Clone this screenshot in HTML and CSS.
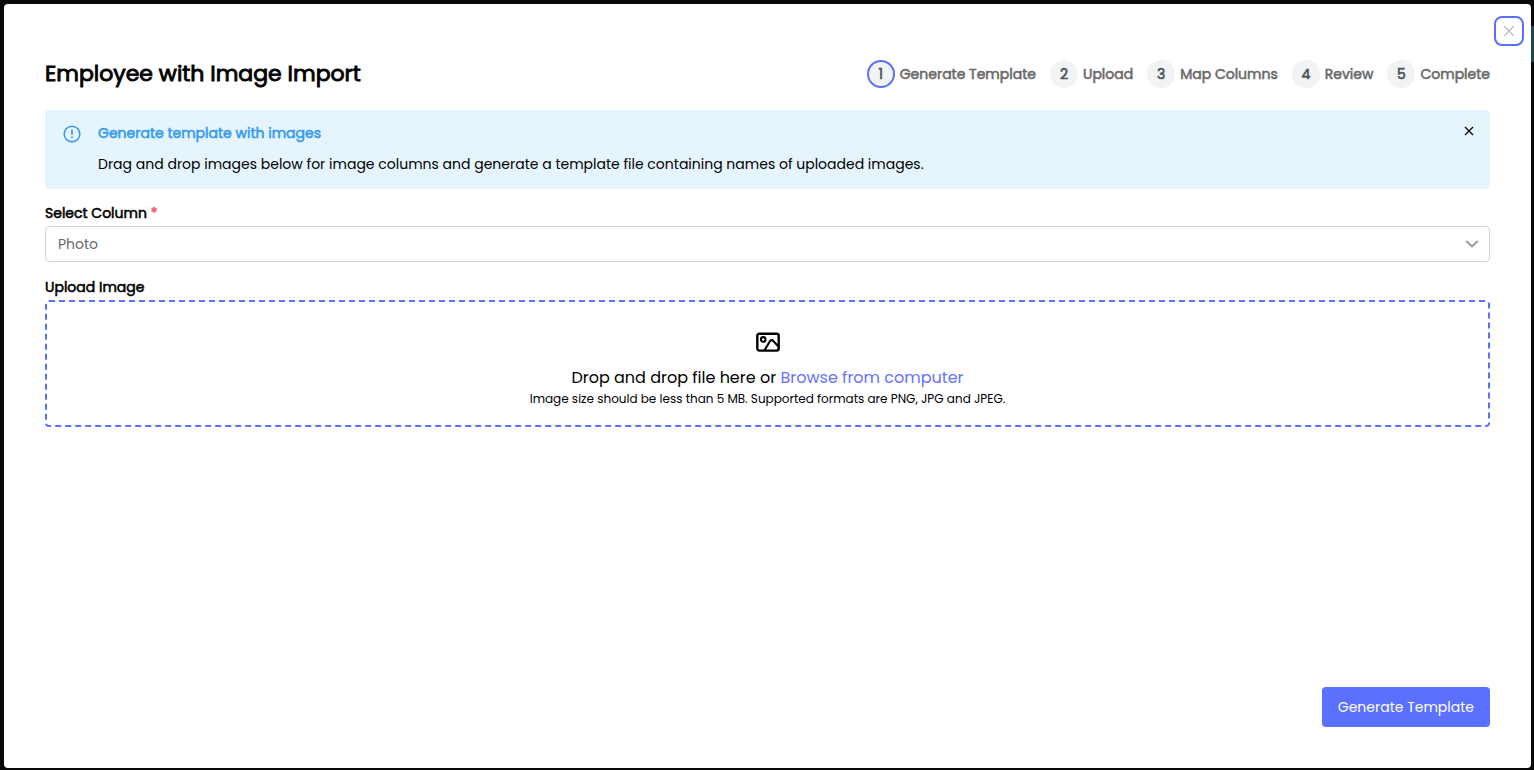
FILE: index.html
```html
<!DOCTYPE html>
<html lang="en">
<head>
<meta charset="utf-8">
<meta name="viewport" content="width=device-width, initial-scale=1">
<title>Employee with Image Import</title>
<link rel="stylesheet" href="styles.css">
</head>
<body>
<main class="modal" role="dialog" aria-labelledby="title">
  <button class="modal-close" type="button" aria-label="Close dialog">
    <svg width="12" height="12" viewBox="0 0 12 12" fill="none" stroke="currentColor" stroke-width="1.2"><path d="M1.2 1.2l9.6 9.6M10.8 1.2L1.2 10.8"/></svg>
  </button>

  <header class="header">
    <h1 class="title strong" id="title">Employee with Image Import</h1>
    <ol class="steps">
      <li class="step strong"><span class="step-number step-number-active">1</span>Generate Template</li>
      <li class="step strong"><span class="step-number">2</span>Upload</li>
      <li class="step strong"><span class="step-number">3</span>Map Columns</li>
      <li class="step strong"><span class="step-number">4</span>Review</li>
      <li class="step strong"><span class="step-number">5</span>Complete</li>
    </ol>
  </header>

  <section class="alert">
    <svg class="alert-icon" width="18" height="18" viewBox="0 0 18 18" fill="none" stroke="currentColor" stroke-width="1.5"><circle cx="9" cy="9" r="7.8"/><path d="M9 4.8v5M9 11.4v1.7" stroke-width="1.7"/></svg>
    <div class="alert-body">
      <h2 class="alert-title strong">Generate template with images</h2>
      <p class="alert-text">Drag and drop images below for image columns and generate a template file containing names of uploaded images.</p>
    </div>
    <button class="alert-close" type="button" aria-label="Dismiss message">
      <svg width="10" height="10" viewBox="0 0 10 10" fill="none" stroke="currentColor" stroke-width="1.2"><path d="M1 1l8 8M9 1L1 9"/></svg>
    </button>
  </section>

  <div class="field">
    <label class="label strong" for="column">Select Column <span class="required">*</span></label>
    <div class="select-wrap">
      <select class="select" id="column"><option>Photo</option></select>
      <svg class="chevron" width="14" height="8" viewBox="0 0 14 8" fill="none" stroke="currentColor" stroke-width="1.8"><path d="M1.3 1L7 6.5 12.7 1"/></svg>
    </div>
  </div>

  <section class="field" aria-labelledby="upload-label">
    <h2 class="label strong" id="upload-label">Upload Image</h2>
    <div class="dropzone">
      <svg width="24" height="24" viewBox="0 0 24 24" fill="none" stroke="currentColor" stroke-width="2.4" stroke-linejoin="round"><rect x="1.3" y="3.8" width="21.4" height="16.8" rx="2"/><circle cx="7.2" cy="9.4" r="2.3" stroke-width="2.1"/><path d="M8.4 20.5l5.5-9.3c.8-1.4 2.4-1.5 3.4-.2l5.2 5.6" stroke-width="2.1"/></svg>
      <p class="drop-text">Drop and drop file here or <a class="browse" href="#">Browse from computer</a></p>
      <p class="drop-hint">Image size should be less than 5 MB. Supported formats are PNG, JPG and JPEG.</p>
    </div>
  </section>

  <footer class="footer">
    <button class="primary" type="button">Generate Template</button>
  </footer>
</main>
</body>
</html>
```
FILE: styles.css
```css
* { box-sizing: border-box; }
html { height: 100%; }
body {
  min-height: 100%;
  margin: 0;
  padding: 4px 3px 2px 4px;
  display: flex;
  background: #080808 linear-gradient(#1d4647, #1d4647) no-repeat;
  background-position: right 0 top 26px;
  background-size: 3px 36px;
  color: #000;
  font-family: Poppins, Inter, sans-serif;
  font-size: 14px;
  line-height: 20px;
}
h1, h2, p, ol { margin: 0; padding: 0; }
button, select { font: inherit; }
button { cursor: pointer; }
svg { display: block; flex: none; }

/* Regular letterforms thickened with an outline */
.strong {
  font-weight: 400;
  -webkit-text-stroke: 0.04em currentColor;
}

.modal {
  position: relative;
  flex: 1;
  display: flex;
  flex-direction: column;
  padding: 56px 41px 41px;
  border-radius: 4px;
  background: #fff;
}
.modal-close {
  position: absolute;
  top: 12px;
  right: 7px;
  width: 30px;
  height: 30px;
  display: grid;
  place-items: center;
  padding: 0;
  border: 2px solid #5b70ff;
  border-radius: 8px;
  background: #fff;
  color: #adb5bd;
}

.header {
  display: flex;
  align-items: center;
  justify-content: space-between;
  margin-bottom: 22px;
}
.title { font-size: 22px; line-height: 28px; }
.steps { display: flex; gap: 14px; list-style: none; }
.step {
  display: flex;
  align-items: center;
  gap: 5px;
  color: #696969;
  white-space: nowrap;
}
.step-number {
  width: 28px;
  height: 28px;
  display: grid;
  place-items: center;
  border: 2px solid #f1f3f5;
  border-radius: 50%;
  background: #f1f3f5;
  color: #495057;
}
.step-number-active { border-color: #5b70ff; }

.alert {
  display: flex;
  gap: 17px;
  margin-bottom: 14px;
  padding: 13px 16px 14px 18px;
  border-radius: 4px;
  background: #e6f4fe;
}
.alert-icon { margin-top: 2px; color: #339af0; }
.alert-body { flex: 1; }
.alert-title { margin-bottom: 11px; color: #339af0; font-size: 14px; }
.alert-text { line-height: 21px; }
.alert-close {
  align-self: flex-start;
  padding: 3px 0;
  border: 0;
  background: none;
  color: #000;
}

.field { margin-bottom: 15px; }
.label { display: block; padding-bottom: 3px; font-size: 14px; }
.required { color: #f06570; }
.select-wrap { position: relative; }
.select {
  width: 100%;
  height: 36px;
  display: block;
  padding: 0 36px 0 12px;
  appearance: none;
  border: 1px solid #ced4da;
  border-radius: 4px;
  background: #fff;
  color: #696969;
}
.chevron {
  position: absolute;
  top: 14px;
  right: 11px;
  color: #999;
  pointer-events: none;
}

.dropzone {
  display: flex;
  flex-direction: column;
  align-items: center;
  padding: 28px 16px 17px;
  border: 2px dashed #5b70ff;
  border-radius: 4px;
  text-align: center;
}
.drop-text { margin-top: 12px; font-size: 16px; line-height: 24px; }
.browse { color: #6872ff; text-decoration: none; }
.drop-hint { font-size: 12px; line-height: 18px; }

.footer { display: flex; justify-content: flex-end; margin-top: auto; }
.primary {
  height: 40px;
  padding: 0 16px;
  border: 0;
  border-radius: 4px;
  background: #5b70ff;
  color: #fff;
}
```
